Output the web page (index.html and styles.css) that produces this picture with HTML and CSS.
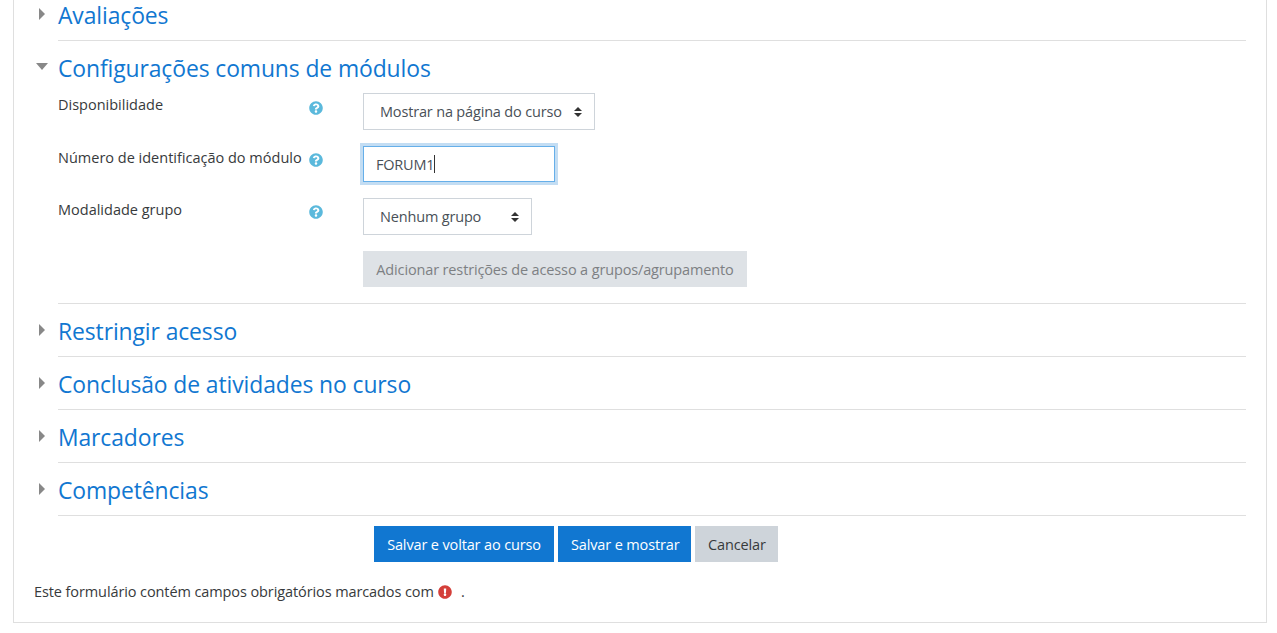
FILE: index.html
```html
<!DOCTYPE html>
<html lang="pt">
<head>
<meta charset="utf-8">
<title>Configurações comuns de módulos</title>
<link rel="stylesheet" href="styles.css">
</head>
<body>
<main class="card">
  <section class="section section-first">
    <h3 class="heading"><svg class="caret" viewBox="0 0 24 24"><path d="M5 5l6 6-6 6z"/></svg>Avaliações</h3>
  </section>
  <section class="section">
    <h3 class="heading"><svg class="caret" viewBox="0 0 24 24"><path d="M2 7h12l-6 7z"/></svg>Configurações comuns de módulos</h3>
    <div class="rows">
      <div class="row">
        <div class="label"><span>Disponibilidade</span><svg class="help" viewBox="0 0 512 512"><path d="M504 256c0 136.997-111.043 248-248 248S8 392.997 8 256C8 119.083 119.043 8 256 8s248 111.083 248 248zM262.655 90c-54.497 0-89.255 22.957-116.549 63.758-3.536 5.286-2.353 12.415 2.715 16.258l34.699 26.31c5.205 3.947 12.621 3.008 16.665-2.122 17.864-22.658 30.113-35.797 57.303-35.797 20.429 0 45.698 13.148 45.698 32.958 0 14.976-12.363 22.667-32.534 33.976C247.128 238.528 216 254.941 216 296v4c0 6.627 5.373 12 12 12h56c6.627 0 12-5.373 12-12v-1.333c0-28.462 83.186-29.647 83.186-106.667 0-58.002-60.165-102-116.531-102zM256 338c-25.365 0-46 20.635-46 46 0 25.364 20.635 46 46 46s46-20.636 46-46c0-25.365-20.635-46-46-46z"/></svg></div>
        <select class="select select-wide"><option>Mostrar na página do curso</option></select>
      </div>
      <div class="row">
        <div class="label"><span>Número de identificação do módulo</span><svg class="help help-tight" viewBox="0 0 512 512"><path d="M504 256c0 136.997-111.043 248-248 248S8 392.997 8 256C8 119.083 119.043 8 256 8s248 111.083 248 248zM262.655 90c-54.497 0-89.255 22.957-116.549 63.758-3.536 5.286-2.353 12.415 2.715 16.258l34.699 26.31c5.205 3.947 12.621 3.008 16.665-2.122 17.864-22.658 30.113-35.797 57.303-35.797 20.429 0 45.698 13.148 45.698 32.958 0 14.976-12.363 22.667-32.534 33.976C247.128 238.528 216 254.941 216 296v4c0 6.627 5.373 12 12 12h56c6.627 0 12-5.373 12-12v-1.333c0-28.462 83.186-29.647 83.186-106.667 0-58.002-60.165-102-116.531-102zM256 338c-25.365 0-46 20.635-46 46 0 25.364 20.635 46 46 46s46-20.636 46-46c0-25.365-20.635-46-46-46z"/></svg></div>
        <div class="input"><span>FORUM1</span><i class="text-caret"></i></div>
      </div>
      <div class="row">
        <div class="label"><span>Modalidade grupo</span><svg class="help help-tight" viewBox="0 0 512 512"><path d="M504 256c0 136.997-111.043 248-248 248S8 392.997 8 256C8 119.083 119.043 8 256 8s248 111.083 248 248zM262.655 90c-54.497 0-89.255 22.957-116.549 63.758-3.536 5.286-2.353 12.415 2.715 16.258l34.699 26.31c5.205 3.947 12.621 3.008 16.665-2.122 17.864-22.658 30.113-35.797 57.303-35.797 20.429 0 45.698 13.148 45.698 32.958 0 14.976-12.363 22.667-32.534 33.976C247.128 238.528 216 254.941 216 296v4c0 6.627 5.373 12 12 12h56c6.627 0 12-5.373 12-12v-1.333c0-28.462 83.186-29.647 83.186-106.667 0-58.002-60.165-102-116.531-102zM256 338c-25.365 0-46 20.635-46 46 0 25.364 20.635 46 46 46s46-20.636 46-46c0-25.365-20.635-46-46-46z"/></svg></div>
        <select class="select select-narrow"><option>Nenhum grupo</option></select>
      </div>
      <div class="row">
        <div class="label"></div>
        <button class="btn btn-disabled" type="button">Adicionar restrições de acesso a grupos/agrupamento</button>
      </div>
    </div>
  </section>
  <section class="section">
    <h3 class="heading"><svg class="caret" viewBox="0 0 24 24"><path d="M5 5l6 6-6 6z"/></svg>Restringir acesso</h3>
  </section>
  <section class="section">
    <h3 class="heading"><svg class="caret" viewBox="0 0 24 24"><path d="M5 5l6 6-6 6z"/></svg>Conclusão de atividades no curso</h3>
  </section>
  <section class="section">
    <h3 class="heading"><svg class="caret" viewBox="0 0 24 24"><path d="M5 5l6 6-6 6z"/></svg>Marcadores</h3>
  </section>
  <section class="section">
    <h3 class="heading"><svg class="caret" viewBox="0 0 24 24"><path d="M5 5l6 6-6 6z"/></svg>Competências</h3>
  </section>
  <div class="actions">
    <button class="btn btn-primary btn-save-course" type="button">Salvar e voltar ao curso</button>
    <button class="btn btn-primary btn-save-show" type="button">Salvar e mostrar</button>
    <button class="btn btn-secondary" type="button">Cancelar</button>
  </div>
  <p class="note">Este formulário contém campos obrigatórios marcados com <svg class="required" viewBox="0 0 512 512"><path d="M504 256c0 136.997-111.043 248-248 248S8 392.997 8 256C8 119.083 119.043 8 256 8s248 111.083 248 248zm-248 50c-25.405 0-46 20.595-46 46s20.595 46 46 46 46-20.595 46-46-20.595-46-46-46zm-43.673-165.346l7.418 136c.347 6.364 5.609 11.346 11.982 11.346h48.546c6.373 0 11.635-4.982 11.982-11.346l7.418-136c.375-6.874-5.098-12.654-11.982-12.654h-63.383c-6.884 0-12.356 5.78-11.981 12.654z"/></svg> <span class="dot">.</span></p>
</main>
</body>
</html>
```
FILE: styles.css
```css
* { box-sizing: border-box; }
html, body { margin: 0; padding: 0; background: #fff; overflow: hidden; }
body {
  font-family: "Open Sans", "Noto Sans", sans-serif;
  font-size: 14.5px;
  color: #373a3c;
  letter-spacing: -0.1px;
}
.card {
  margin: 0 10px 0 13px;
  height: 623px;
  border: 1px solid #dfdfdf;
  border-top: 0;
  padding: 0 20px;
}
.section {
  margin-left: 24px;
  padding: 14px 0 10px;
  border-bottom: 1px solid #dfdfdf;
}
.section-first { padding-top: 2px; }
.heading {
  display: flex;
  align-items: flex-start;
  margin: 0;
  font-size: 22.9px;
  font-weight: 400;
  line-height: 28px;
  color: #1177d1;
  letter-spacing: -0.1px;
}
.caret {
  flex: none;
  width: 24px;
  height: 24px;
  margin: 1px 0 0 -24px;
  fill: #888;
}
.rows { margin-top: 10px; }
.row {
  display: grid;
  grid-template-columns: 305px 1fr;
  justify-items: start;
  margin-bottom: 16px;
}
.row:last-child { margin-bottom: 6px; }
.label {
  display: flex;
  width: 100%;
  line-height: 24px;
  padding-right: 40px;
  justify-content: space-between;
  align-items: flex-start;
  letter-spacing: 0;
}
.help {
  flex: none;
  width: 14px;
  height: 14px;
  margin-top: 8px;
  fill: #5bb9dc;
}
.help-tight { margin-top: 7px; }
.select {
  appearance: none;
  -webkit-appearance: none;
  font: inherit;
  letter-spacing: -0.17px;
  color: #495057;
  height: 37px;
  padding: 0 24px 0 16px;
  border: 1px solid #ced4da;
  border-radius: 0;
  background: #fff url("data:image/svg+xml,%3Csvg xmlns='http://www.w3.org/2000/svg' width='8' height='12'%3E%3Cpath d='M0 5l4-4 4 4zM0 7l4 4 4-4z' fill='%23333'/%3E%3C/svg%3E") no-repeat right 12px center;
}
.select-wide { width: 232px; }
.select-narrow { width: 169px; }
.input {
  display: flex;
  align-items: center;
  width: 192px;
  height: 36px;
  padding: 0 12px;
  border: 1px solid #66afe9;
  box-shadow: 0 0 0 3px rgba(17, 119, 209, 0.25);
  color: #495057;
  letter-spacing: -0.2px;
}
.text-caret {
  width: 1px;
  height: 18px;
  background: #333;
}
.btn {
  font: inherit;
  letter-spacing: -0.14px;
  height: 36px;
  padding: 0 13px;
  border: 0;
  border-radius: 0;
  white-space: nowrap;
}
.btn-disabled { background: #dee2e6; color: #7d8083; width: 384px; }
.btn-primary { background: #1177d1; color: #fff; }
.btn-secondary { background: #ced4da; color: #373a3c; width: 83px; }
.btn-save-course { width: 180px; }
.btn-save-show { width: 133px; }
.actions {
  display: flex;
  gap: 4px;
  margin: 10px 0 0 340px;
}
.note {
  margin: 19px 0 0;
  line-height: 22px;
}
.required {
  width: 14px;
  height: 14px;
  margin-left: 1px;
  vertical-align: -2px;
  fill: #d43f3a;
}
.dot { margin-left: 5px; }
```
